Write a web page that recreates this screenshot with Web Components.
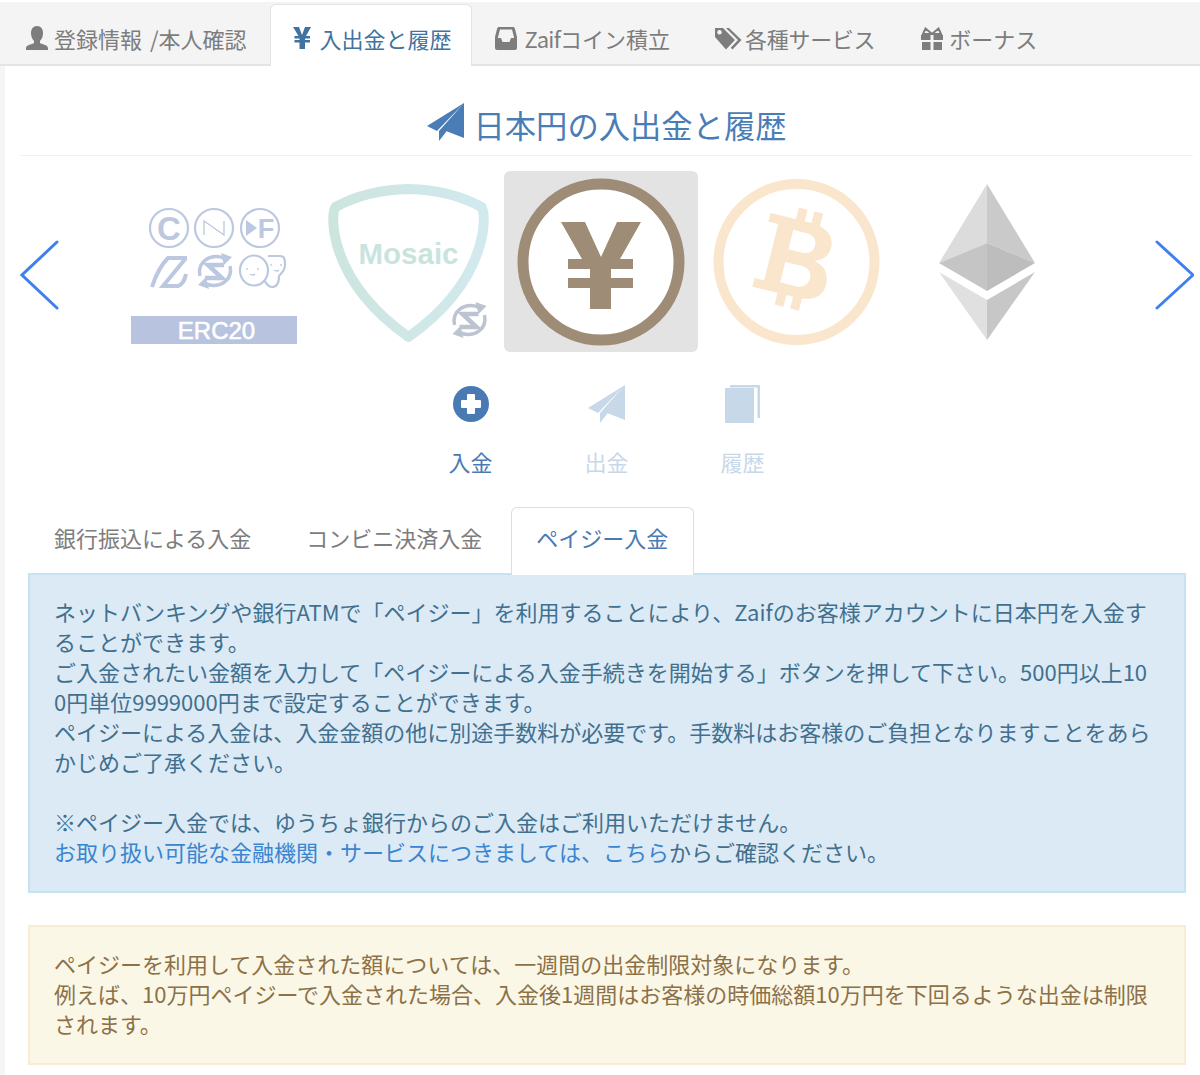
<!DOCTYPE html>
<html lang="ja">
<head>
<meta charset="utf-8">
<title>日本円の入出金と履歴</title>
<style>
  html, body { margin: 0; padding: 0; background: #f5f5f5; }
  body { font-family: "Noto Sans CJK JP", "Noto Sans", sans-serif; font-size: 22px; width: 1200px; height: 1075px; overflow: hidden; }
</style>
</head>
<body>
<zaif-page>
  <tab-nav slot="nav">
    <nav-tab icon="user" gap="6" style="word-spacing:3px">登録情報 /本人確認</nav-tab>
    <nav-tab icon="yen" gap="9" active>入出金と履歴</nav-tab>
    <nav-tab icon="inbox" gap="8"><span style="letter-spacing:-.75px">Zaif</span>コイン積立</nav-tab>
    <nav-tab icon="tags" gap="3" style="letter-spacing:-.3px">各種サービス</nav-tab>
    <nav-tab icon="gift" gap="6" style="margin-left:2px">ボーナス</nav-tab>
  </tab-nav>

  <page-title>日本円の入出金と履歴</page-title>

  <coin-carousel></coin-carousel>

  <action-row>
    <action-item icon="plus" active>入金</action-item>
    <action-item icon="send">出金</action-item>
    <action-item icon="book">履歴</action-item>
  </action-row>

  <sub-tabs>
    <sub-tab>銀行振込による入金</sub-tab>
    <sub-tab>コンビニ決済入金</sub-tab>
    <sub-tab active>ペイジー入金</sub-tab>
  </sub-tabs>

  <alert-box kind="info">ネットバンキングや銀行ATMで「ペイジー」を利用することにより、Zaifのお客様アカウントに日本円を入金することができます。<br>ご入金されたい金額を入力して「ペイジーによる入金手続きを開始する」ボタンを押して下さい。500円以上10<br>0円単位9999000円まで設定することができます。<br>ペイジーによる入金は、入金金額の他に別途手数料が必要です。手数料はお客様のご負担となりますことをあらかじめご了承ください。<br><br>※ペイジー入金では、ゆうちょ銀行からのご入金はご利用いただけません。<br><a href="#">お取り扱い可能な金融機関・サービスにつきましては、こちら</a>からご確認ください。</alert-box>

  <alert-box kind="warn" style="margin-top:32px">ペイジーを利用して入金された額については、一週間の出金制限対象になります。<br>例えば、10万円ペイジーで入金された場合、入金後1週間はお客様の時価総額10万円を下回るような出金は制限されます。</alert-box>
</zaif-page>

<script>
// 同じアイコンをタブと見出しで使い回す
const ICONS = {
  user: '<svg viewBox="0 0 22 24" width="22" height="24"><path d="M11 0c4 0 6 3 6 7 0 3-1 6-3 8v2c1 1 8 2 8 5v2H0v-2c0-3 7-4 8-5v-2C6 13 5 10 5 7c0-4 2-7 6-7z"/></svg>',
  yen: '<svg viewBox="0 0 18 22" width="18" height="22"><path d="M0 0h6l3 8 3-8h6l-5 9h4v2.500h-5V13h5v2.500h-5V22H6.500v-6.500h-5V13h5v-1.500h-5V9h4z"/></svg>',
  inbox: '<svg viewBox="0 0 22 23" width="22" height="23"><path fill-rule="evenodd" d="M4 0h14c1 0 1.500.5 2 2l2 8v11a2 2 0 0 1-2 2H2a2 2 0 0 1-2-2V10l2-8c.5-1.500 1-2 2-2zM5 2.500 2.800 11H6l1.500 4h7L16 11h3.200L17 2.500z"/></svg>',
  tags: '<svg viewBox="0 0 28 23" width="28" height="23"><path fill-rule="evenodd" d="M1 1h8l12 12-9 9.500L1 10zM5.500 3a2.300 2.300 0 1 0 .01 0z"/><path d="M12 1h3l12.500 12-9 9.500-1.800-1.800L24 13z"/></svg>',
  gift: '<svg viewBox="0 0 22 23" width="22" height="23"><path d="M0 8h9.500v5H0zM12.500 8H22v5h-9.500zM1 15h8.500v8H1zM12.500 15H21v8h-8.500z"/><path fill="none" stroke="currentColor" stroke-width="2" d="M11 7 4.500 1.500 2 7zM11 7l6.500-5.500L20 7z"/></svg>',
  send: '<svg viewBox="0 0 37 38" width="37" height="38"><path d="M37 0 0 23l10 5zM37 0 12 28v10l7-9zM37 0 19 28l18 7z"/></svg>',
  plus: '<svg viewBox="0 0 36 36" width="36" height="36"><circle cx="18" cy="18" r="18"/><path fill="#fff" d="M15 8h6a1 1 0 0 1 1 1v5h5a1 1 0 0 1 1 1v6a1 1 0 0 1-1 1h-5v5a1 1 0 0 1-1 1h-6a1 1 0 0 1-1-1v-5H9a1 1 0 0 1-1-1v-6a1 1 0 0 1 1-1h5V9a1 1 0 0 1 1-1z"/></svg>',
  book: '<svg viewBox="0 0 35 38" width="35" height="38"><path d="M1 3h28v35H1a1 1 0 0 1-1-1V4a1 1 0 0 1 1-1z"/><path d="M5 0h29a1 1 0 0 1 1 1v32h-2.500V2.500H5z"/></svg>'
}

class ZaifPage extends HTMLElement {
  constructor() {
    super()
    this.attachShadow({ mode: 'open' })
    this.shadowRoot.innerHTML = `
      <style>
        :host { display: block; margin-left: 5px; background: #fff; height: 1075px; }
        .top { display: block; background: #fff; padding-top: 2px; margin-left: -5px; }
        main { display: block; padding: 0 7px 0 15px; }
      </style>
      <div class="top"><slot name="nav"></slot></div>
      <main><slot></slot></main>`
  }
}

class TabNav extends HTMLElement {
  constructor() {
    super()
    this.attachShadow({ mode: 'open' })
    this.shadowRoot.innerHTML = `
      <style>
        :host { display: flex; align-items: flex-end; gap: 2px; padding-left: 5px; background: #f4f4f4; border-bottom: 2px solid #e4e4e4; box-sizing: content-box; height: 62px; }
      </style>
      <slot></slot>`
  }
}

class NavTab extends HTMLElement {
  constructor() {
    super()
    this.attachShadow({ mode: 'open' })
    const gap = this.getAttribute('gap') || '6'
    this.shadowRoot.innerHTML = `
      <style>
        :host { display: flex; align-items: center; box-sizing: border-box; height: 62px; padding: 12px 20px 3px; color: #7d7d7d; line-height: 30px; white-space: nowrap; border: 1px solid transparent; border-bottom: 0; border-radius: 6px 6px 0 0; }
        :host([active]) { background: #fff; color: #41739f; border-color: #e4e4e4; margin-bottom: -2px; padding: 8px 19px 3px 22px; }
        svg { fill: currentColor; display: block; }
        span.i { display: block; margin-right: ${gap}px; }
      </style>
      <span class="i">${ICONS[this.getAttribute('icon')]}</span>
      <slot></slot>`
  }
}

class PageTitle extends HTMLElement {
  constructor() {
    super()
    this.attachShadow({ mode: 'open' })
    this.shadowRoot.innerHTML = `
      <style>
        :host { display: flex; justify-content: center; align-items: center; gap: 10px; height: 90px; box-sizing: border-box; padding-top: 28px; border-bottom: 1px solid #f1f1f1; font-size: 31.3px; color: #4a7db6; line-height: 42px; }
        svg { fill: currentColor; display: block; margin-top: -6px; }
      </style>
      ${ICONS.send}
      <slot></slot>`
  }
}

class CoinCarousel extends HTMLElement {
  constructor() {
    super()
    this.attachShadow({ mode: 'open' })
    this.shadowRoot.innerHTML = `
      <style>
        :host { display: flex; align-items: center; height: 181px; margin-top: 15px; }
        .arrow { width: 39px; height: 70px; flex: none; display: block; margin-top: 27px; fill: none; stroke: #4080ee; stroke-width: 3; stroke-linecap: round; stroke-linejoin: miter; }
        .next { margin-left: 70.500px; }
        .prev { margin-right: 58px; }
        .slides { display: grid; grid-template-columns: repeat(5, 193.500px); flex: none; height: 181px; }
        .slide { display: block; width: 193.500px; height: 181px; }
        .on { background: #e3e3e3; border-radius: 6px; }
        text { font-family: "Liberation Sans", "Noto Sans", sans-serif; font-weight: 700; }
      </style>
      <svg class="arrow prev" viewBox="0 0 39 70"><path d="M37 2 2 35l35 33"/></svg>
      <div class="slides">
        <svg class="slide" viewBox="117 171 193.500 181">
          <defs>
            <g id="sync">
              <path fill="none" stroke-width="3.500" d="M-15 5C-18 -9 -5 -18 9 -13M15 -5C18 9 5 18 -9 13"/>
              <path stroke="none" d="M6 -18l11 4-8 8zM-6 18l-11-4 8-8z"/>
              <path fill="none" stroke-width="4.500" d="M9 -6H-7L7 7H-10"/>
            </g>
          </defs>
          <g fill="none" stroke="#bcc8e0" stroke-width="2.200">
            <circle cx="169" cy="228" r="19"/>
            <circle cx="214" cy="228" r="19"/>
            <circle cx="260" cy="228" r="19"/>
            <path stroke-width="1.300" d="M204 235v-14l20 14v-14"/>
            <path stroke-width="4" d="M187 258H168Q158 268 152 287M186 258 163 286H178Q184 284 186 274"/>
            <path d="M240 271a14 15 0 1 0 28-1 14 15 0 1 0-28 1z"/>
            <path d="M268 256h12c5 0 5 4 5 9 0 6-4 8-6 11 0 5-1 11-7 11-4 0-6-4-8-7"/>
            <path stroke-width="1.300" d="M247 268v2M258 268v2M250 274q3 2 5 0M271 264v2M281 264v2M274 270q3 2 5 0"/>
          </g>
          <text x="169" y="240" font-size="33" text-anchor="middle" fill="#bcc8e0">C</text>
          <path d="M246 220l11 8-11 8z" fill="#bcc8e0"/>
          <text x="266" y="238" font-size="27" text-anchor="middle" fill="#bcc8e0">F</text>
          <use href="#sync" x="215" y="271" fill="#bcc8e0" stroke="#bcc8e0"/>
          <rect x="131" y="316" width="166" height="28" fill="#b8c3e0"/>
          <text x="216.500" y="339" font-size="24" text-anchor="middle" fill="#fff" style="font-weight:400;stroke:#fff;stroke-width:.6">ERC20</text>
        </svg>
        <svg class="slide" viewBox="310.500 171 193.500 181">
          <defs>
            <linearGradient id="sh" x1="0" x2="1" y1="0" y2="0"><stop offset="0" stop-color="#cde5df"/><stop offset="1" stop-color="#d2e9ee"/></linearGradient>
          </defs>
          <path fill="none" stroke="url(#sh)" stroke-width="10" stroke-linejoin="round" d="M408 189Q366 190 335 207Q331 214 334 234Q345 292 408 337Q471 292 482 234Q485 214 481 207Q450 190 408 189Z"/>
          <text x="408" y="264" font-size="29.500" text-anchor="middle" fill="#c9e4de">Mosaic</text>
          <use href="#sync" x="469" y="320" fill="#bcc4d2" stroke="#bcc4d2"/>
        </svg>
        <svg class="slide on" viewBox="504 171 193.500 181">
          <circle cx="601" cy="262" r="78" fill="#fff" stroke="#9f8c76" stroke-width="11"/>
          <path fill="#9f8c76" d="M561 222h24l16 35 16-35h24l-21 37h13v10h-22v9h22v10h-22v21h-21v-21h-22v-10h22v-9h-22v-10h14z"/>
        </svg>
        <svg class="slide" viewBox="697.500 171 193.500 181">
          <circle cx="796" cy="262" r="78" fill="#fff" stroke="#f9e6cd" stroke-width="10"/>
          <g transform="translate(794 258) rotate(14)" fill="#f9e6cd">
            <path fill-rule="evenodd" d="M-34 -38H8C24 -38 33 -30 33 -19 33 -10 28 -5 20 -2 32 0 37 8 37 19 37 31 27 38 10 38H-34V29H-24V-29H-34ZM-8 -27V-7H6C14 -7 17 -12 17 -17 17 -23 13 -27 6 -27ZM-8 6V27H8C16 27 20 22 20 16 20 10 16 6 8 6Z"/>
            <path d="M-8 -50H1V-36H-8ZM8 -50H17V-36H8ZM-8 36H1V50H-8ZM8 36H17V50H8Z"/>
          </g>
        </svg>
        <svg class="slide" viewBox="891 171 193.500 181">
          <path fill="#dcdcdc" d="M987 184 939 263 987 243z"/>
          <path fill="#cacaca" d="M987 184 1035 263 987 243z"/>
          <path fill="#c5c5c5" d="M987 243 939 263 987 291z"/>
          <path fill="#bdbdbd" d="M987 243 1035 263 987 291z"/>
          <path fill="#e0e0e0" d="M939 272 987 300V340z"/>
          <path fill="#c7c7c7" d="M1035 272 987 300V340z"/>
        </svg>
      </div>
      <svg class="arrow next" viewBox="0 0 39 70"><path d="M2 2l36 33L2 68"/></svg>`
  }
}

class ActionRow extends HTMLElement {
  constructor() {
    super()
    this.attachShadow({ mode: 'open' })
    this.shadowRoot.innerHTML = `
      <style>
        :host { display: flex; justify-content: center; margin-top: 33px; }
      </style>
      <slot></slot>`
  }
}

class ActionItem extends HTMLElement {
  constructor() {
    super()
    this.attachShadow({ mode: 'open' })
    this.shadowRoot.innerHTML = `
      <style>
        :host { display: flex; flex-direction: column; align-items: center; width: 136px; color: #c7d8e9; line-height: 30px; }
        :host([active]) { color: #4a7ab3; }
        .i { height: 38px; margin-bottom: 23px; display: flex; align-items: center; }
        svg { fill: currentColor; display: block; }
      </style>
      <div class="i">${ICONS[this.getAttribute('icon')]}</div>
      <slot></slot>`
  }
}

class SubTabs extends HTMLElement {
  constructor() {
    super()
    this.attachShadow({ mode: 'open' })
    this.shadowRoot.innerHTML = `
      <style>
        :host { display: flex; gap: 5px; height: 66px; margin: 31px 0 0 9px; }
      </style>
      <slot></slot>`
  }
}

class SubTab extends HTMLElement {
  constructor() {
    super()
    this.attachShadow({ mode: 'open' })
    this.shadowRoot.innerHTML = `
      <style>
        :host { display: block; box-sizing: border-box; height: 66px; padding: 14px 24px 0; color: #7d7d7d; line-height: 30px; border: 1px solid transparent; border-bottom: 0; border-radius: 6px 6px 0 0; }
        :host([active]) { position: relative; z-index: 1; height: 68px; margin-left: -1px; padding-left: 24px; padding-right: 25px; background: #fff; border-color: #dedede; color: #4a7ab3; }
      </style>
      <slot></slot>`
  }
}

class AlertBox extends HTMLElement {
  constructor() {
    super()
    this.attachShadow({ mode: 'open' })
    this.shadowRoot.innerHTML = `
      <style>
        :host { display: block; margin-left: 8px; width: 1158px; box-sizing: border-box; padding: 21px 24px 25px; border: 2px solid #c5e3f0; background: #dceaf5; color: #41708f; line-height: 30px; word-break: break-all; }
        :host([kind=warn]) { border-color: #f8ecd2; background: #fbf7e6; color: #8c7148; }
        ::slotted(a) { color: #3a85cf; text-decoration: none; }
      </style>
      <slot></slot>`
  }
}

window.customElements.define('zaif-page', ZaifPage)
window.customElements.define('tab-nav', TabNav)
window.customElements.define('nav-tab', NavTab)
window.customElements.define('page-title', PageTitle)
window.customElements.define('coin-carousel', CoinCarousel)
window.customElements.define('action-row', ActionRow)
window.customElements.define('action-item', ActionItem)
window.customElements.define('sub-tabs', SubTabs)
window.customElements.define('sub-tab', SubTab)
window.customElements.define('alert-box', AlertBox)
</script>
</body>
</html>
